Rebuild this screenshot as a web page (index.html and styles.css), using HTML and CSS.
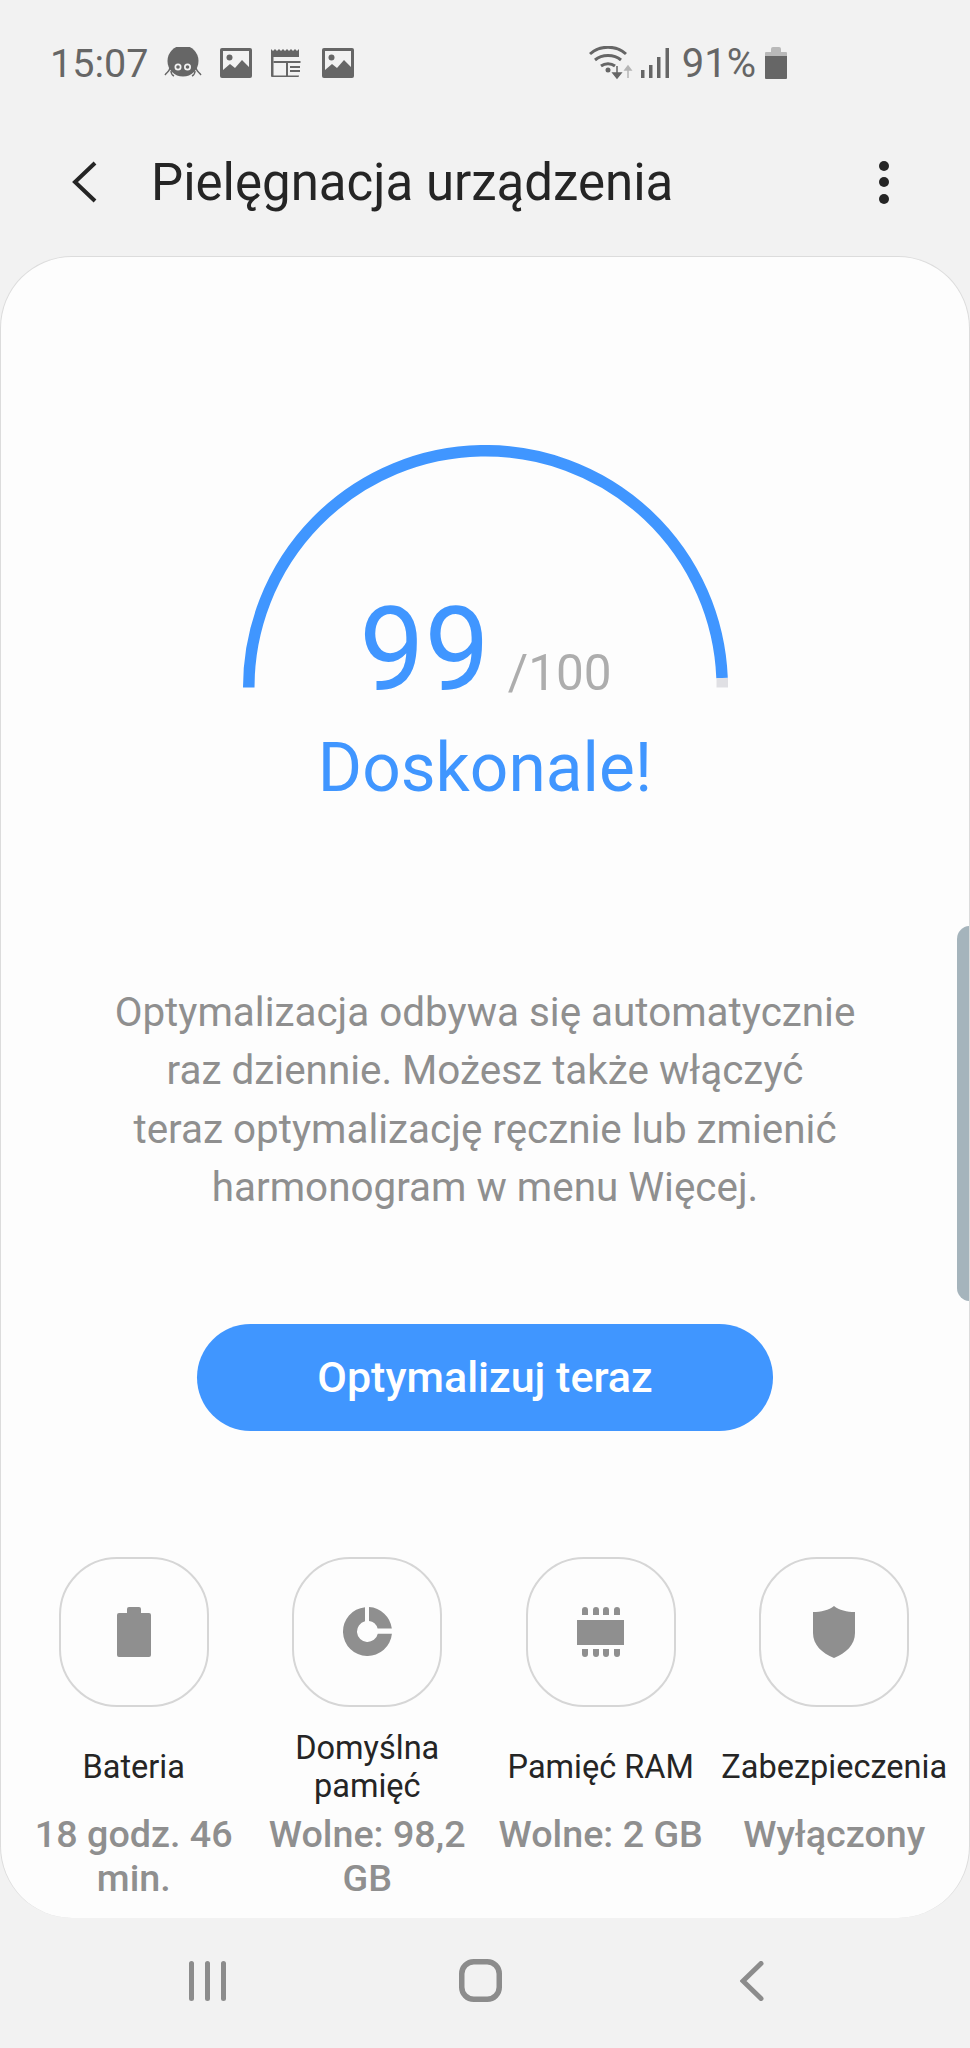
FILE: index.html
```html
<!DOCTYPE html>
<html lang="pl">
<head>
  <meta charset="UTF-8" />
  <meta name="viewport" content="width=device-width, initial-scale=1.0"/>
  <title>Pielęgnacja urządzenia</title>
  <link rel="stylesheet" href="styles.css">
</head>
<body>
  <div class="screen">
    <div class="status-bar">
      <div class="status-left">
        <span class="clock">15:07</span>
        <svg class="icon-spider" viewBox="0 0 38 32">
          <circle cx="19" cy="14" r="15.5" fill="#666"/>
          <path d="M6 21c-1 4-3 4-5 7M32 21c1 4 3 4 5 7M7 24c0 3 1 4 3 5M31 24c0 3-1 4-3 5" fill="none" stroke="#666" stroke-width="1.4"/>
          <circle cx="14" cy="20" r="3.5" fill="#f2f2f2"/>
          <circle cx="23.500" cy="20" r="3.500" fill="#f2f2f2"/>
          <circle cx="14" cy="20" r="1.800" fill="#666"/>
          <circle cx="23.500" cy="20" r="1.800" fill="#666"/>
        </svg>
        <svg class="icon-pic" viewBox="0 0 32 30">
          <rect width="32" height="30" rx="2" fill="#666"/>
          <rect x="3" y="3" width="26" height="24" fill="#f2f2f2"/>
          <circle cx="9.500" cy="9.500" r="3" fill="#666"/>
          <path d="M3 22l7-6 5 4 7-8 7 7v11H3z" fill="#666"/>
        </svg>
        <svg class="icon-news" viewBox="0 0 32 30">
          <path d="M0 1l2 2 2-2 2 2 2-2 2 2 2-2 2 2 2-2 2 2 2-2 2 2 2-2 2 2 2-2v27a1 1 0 0 1-1 1H1a1 1 0 0 1-1-1z" fill="#666"/>
          <rect x="2.500" y="9" width="27" height="18.500" fill="#f2f2f2"/>
          <rect x="2.500" y="13" width="27" height="2" fill="#666"/>
          <rect x="15" y="15" width="2" height="13" fill="#666"/>
          <path d="M19 18h10v2H19zM19 22h10v2H19z" fill="#666"/>
        </svg>
        <svg class="icon-pic" viewBox="0 0 32 30">
          <rect width="32" height="30" rx="2" fill="#666"/>
          <rect x="3" y="3" width="26" height="24" fill="#f2f2f2"/>
          <circle cx="9.500" cy="9.500" r="3" fill="#666"/>
          <path d="M3 22l7-6 5 4 7-8 7 7v11H3z" fill="#666"/>
        </svg>
      </div>
      <div class="status-right">
        <svg class="icon-wifi" viewBox="0 0 44 34">
          <path d="M1 8C11-1 27-1 37 8M6 14c7-6 19-6 26 0M12 20c4-3 10-3 14 0" fill="none" stroke="#666" stroke-width="3"/>
          <circle cx="19" cy="24" r="2.500" fill="#666"/>
          <path d="M28 20v9M24 27l4 5 4-5z" fill="#666" stroke="#666" stroke-width="1.500"/>
          <path d="M39 32v-10M36 24l3-4 3 4z" fill="#b5b5b5" stroke="#b5b5b5" stroke-width="1.500"/>
        </svg>
        <svg class="icon-signal" viewBox="0 0 28 30">
          <path d="M0 22h3.500v8H0zM8 17h3.500v13H8zM16 9h3.500v21H16zM24.500 0H28v30h-3.500z" fill="#666"/>
        </svg>
        <span class="battery-text">91%</span>
        <svg class="icon-battery" viewBox="0 0 22 32">
          <path d="M6 2a2 2 0 0 1 2-2h6a2 2 0 0 1 2 2v3h5a1 1 0 0 1 1 1v3H0V6a1 1 0 0 1 1-1h5z" fill="#b9b9b9"/>
          <path d="M0 9h22v22a1 1 0 0 1-1 1H1a1 1 0 0 1-1-1z" fill="#666"/>
        </svg>
      </div>
    </div>

    <div class="app-bar">
      <svg class="icon-back" viewBox="0 0 26 42">
        <path d="M24 2L4 21l20 19" fill="none" stroke="#252525" stroke-width="4"/>
      </svg>
      <h1 class="title">Pielęgnacja urządzenia</h1>
      <div class="more">
        <span class="dot"></span>
        <span class="dot"></span>
        <span class="dot"></span>
      </div>
    </div>

    <div class="card">
      <div class="scroll-handle"></div>

      <div class="gauge">
        <svg class="gauge-arc" viewBox="0 0 485 242.500">
          <path d="M5.750 242.500A236.750 236.750 0 0 1 479.060 233" fill="none" stroke="#4096ff" stroke-width="11.500"/>
          <path d="M479.250 242.500V233" fill="none" stroke="#e0e0e4" stroke-width="11.500"/>
        </svg>
        <div class="score">
          <span class="score-value">99</span>
          <span class="score-max">/100</span>
        </div>
      </div>
      <div class="rating">Doskonale!</div>

      <p class="info">Optymalizacja odbywa się automatycznie<br>raz dziennie. Możesz także włączyć<br>teraz optymalizację ręcznie lub zmienić<br>harmonogram w menu Więcej.</p>

      <button class="optimize">Optymalizuj teraz</button>

      <div class="tiles">
        <div class="tile">
          <div class="tile-icon">
            <svg viewBox="0 0 34 50" class="svg-battery">
              <path d="M10 2a2 2 0 0 1 2-2h10a2 2 0 0 1 2 2v4h8a2 2 0 0 1 2 2v40a2 2 0 0 1-2 2H2a2 2 0 0 1-2-2V8a2 2 0 0 1 2-2h8z" fill="#8f8f8f"/>
            </svg>
          </div>
          <div class="tile-label">Bateria</div>
          <div class="tile-value">18 godz. 46 min.</div>
        </div>
        <div class="tile">
          <div class="tile-icon">
            <svg viewBox="0 0 49 49" class="svg-storage">
              <path d="M22 .13A24.500 24.500 0 1 0 48.900 26.700H34.770A10.500 10.500 0 1 1 22 14.300Z" fill="#8f8f8f"/>
              <path d="M26 .05A24.500 24.500 0 0 1 48.830 21.500H34.600A10.500 10.500 0 0 0 26 14.100Z" fill="#8f8f8f"/>
            </svg>
          </div>
          <div class="tile-label">Domyślna pamięć</div>
          <div class="tile-value">Wolne: 98,2 GB</div>
        </div>
        <div class="tile">
          <div class="tile-icon">
            <svg viewBox="0 0 47 50" class="svg-ram">
              <rect x="0" y="13" width="47" height="25" fill="#8f8f8f"/>
              <path d="M5 8V3a3 3 0 0 1 6 0v5zM16 8V3a3 3 0 0 1 6 0v5zM26 8V3a3 3 0 0 1 6 0v5zM37 8V3a3 3 0 0 1 6 0v5zM5 42v5a3 3 0 0 0 6 0v-5zM16 42v5a3 3 0 0 0 6 0v-5zM26 42v5a3 3 0 0 0 6 0v-5zM37 42v5a3 3 0 0 0 6 0v-5z" fill="#8f8f8f"/>
            </svg>
          </div>
          <div class="tile-label">Pamięć RAM</div>
          <div class="tile-value">Wolne: 2 GB</div>
        </div>
        <div class="tile">
          <div class="tile-icon">
            <svg viewBox="0 0 42 52" class="svg-shield">
              <path d="M21 0c5 4 13 6 21 6v21c0 12-9 20-21 25C9 47 0 39 0 27V6c8 0 16-2 21-6z" fill="#8f8f8f"/>
            </svg>
          </div>
          <div class="tile-label">Zabezpieczenia</div>
          <div class="tile-value">Wyłączony</div>
        </div>
      </div>
    </div>

    <div class="nav-bar">
      <svg class="nav-recent" viewBox="0 0 38 40">
        <path d="M2.500 2.500v35M18.500 2.500v35M34.500 2.500v35" fill="none" stroke="#8c8c8c" stroke-width="5" stroke-linecap="round"/>
      </svg>
      <svg class="nav-home" viewBox="0 0 43 43">
        <rect x="2.750" y="2.750" width="37.500" height="37.500" rx="12" fill="none" stroke="#8c8c8c" stroke-width="5.500"/>
      </svg>
      <svg class="nav-back" viewBox="0 0 24 40">
        <path d="M21 2.500L3 20l18 17.500" fill="none" stroke="#8c8c8c" stroke-width="5" stroke-linecap="round"/>
      </svg>
    </div>
  </div>
</body>
</html>
```
FILE: styles.css
```css
* {
  box-sizing: border-box;
}

body {
  margin: 0;
  padding: 0;
  background-color: #f2f2f2;
  font-family: Roboto, "Liberation Sans", sans-serif;
}

svg {
  display: block;
}

.screen {
  width: 970px;
  height: 2048px;
  display: flex;
  flex-direction: column;
  overflow: hidden;
}

/* status bar */
.status-bar {
  height: 124px;
  padding: 2px 183px 0 50px;
  display: flex;
  align-items: center;
  justify-content: space-between;
  color: #666;
}

.status-left,
.status-right {
  display: flex;
  align-items: center;
}

.clock {
  font-size: 39.500px;
}

.battery-text {
  font-size: 40px;
}

.icon-spider {
  width: 38px;
  height: 32px;
  margin-left: 16px;
}

.icon-pic,
.icon-news {
  width: 32px;
  height: 30px;
}

.icon-spider + .icon-pic {
  margin-left: 17.500px;
}

.icon-news {
  margin-left: 19px;
}

.icon-news + .icon-pic {
  margin-left: 19px;
}

.icon-wifi {
  width: 44px;
  height: 34px;
}

.icon-signal {
  width: 28px;
  height: 30px;
  margin-left: 8px;
}

.battery-text {
  margin-left: 13px;
}

.icon-battery {
  width: 22px;
  height: 32px;
  margin-left: 9px;
}

/* app bar */
.app-bar {
  height: 132px;
  padding: 0 81px 16px 71px;
  display: flex;
  align-items: center;
}

.icon-back {
  width: 26px;
  height: 42px;
}

.title {
  flex: 1;
  margin: 0 0 0 54px;
  font-size: 51px;
  font-weight: 400;
  color: #252525;
}

.more {
  display: flex;
  flex-direction: column;
  gap: 6.500px;
}

.dot {
  width: 10px;
  height: 10px;
  border-radius: 50%;
  background-color: #252525;
}

/* main card */
.card {
  position: relative;
  height: 1662px;
  padding-top: 188px;
  background-color: #fdfdfd;
  border: 1px solid #dcdcdc;
  border-bottom: none;
  border-radius: 72px;
  overflow: hidden;
}

.scroll-handle {
  position: absolute;
  top: 669px;
  right: -1px;
  width: 13px;
  height: 375px;
  background-color: #a5b4bc;
  border-radius: 14px 0 0 14px;
}

.gauge {
  display: grid;
  width: 485px;
  margin: 0 auto;
}

.gauge-arc,
.score {
  grid-area: 1 / 1;
}

.gauge-arc {
  width: 485px;
  height: 242.500px;
}

.score {
  align-self: end;
  margin-bottom: -20.500px;
  display: flex;
  align-items: baseline;
  justify-content: center;
  line-height: 1;
}

.score-value {
  margin-left: 1px;
  font-size: 116px;
  color: #4096ff;
}

.score-max {
  margin-left: 18px;
  font-size: 49.500px;
  color: #adadad;
}

.rating {
  margin-top: 41.500px;
  text-align: center;
  font-size: 67.600px;
  line-height: 78px;
  color: #4096ff;
}

.info {
  margin: 177px 0 0;
  text-align: center;
  font-size: 40.400px;
  line-height: 58.400px;
  color: #8f8f8f;
}

.optimize {
  display: block;
  width: 576px;
  height: 107px;
  margin: 106px auto 0;
  border: none;
  border-radius: 54px;
  background-color: #4096ff;
  color: #fff;
  font-family: inherit;
  font-size: 43px;
  font-weight: 500;
}

/* bottom tiles */
.tiles {
  margin-top: 126px;
  padding: 0 18px 0 16px;
  display: grid;
  grid-template-columns: repeat(4, 1fr);
}

.tile {
  display: flex;
  flex-direction: column;
  align-items: center;
  text-align: center;
}

.tile-icon {
  width: 150px;
  height: 150px;
  display: flex;
  align-items: center;
  justify-content: center;
  border: 2px solid #d6d6d6;
  border-radius: 58px;
}

.svg-battery {
  width: 34px;
  height: 50px;
}

.svg-storage {
  width: 49px;
  height: 49px;
}

.svg-ram {
  width: 47px;
  height: 50px;
}

.svg-shield {
  width: 42px;
  height: 52px;
}

.tile-label {
  height: 76px;
  margin-top: 22px;
  display: flex;
  align-items: center;
  font-size: 32.500px;
  line-height: 38px;
  color: #252525;
}

.tile-value {
  margin-top: 7px;
  font-size: 37.700px;
  font-weight: 500;
  line-height: 44px;
  color: #8f8f8f;
}

/* nav bar */
.nav-bar {
  flex: 1;
  padding: 0 0 5px 189px;
  display: flex;
  align-items: center;
}

.nav-recent {
  width: 38px;
  height: 40px;
}

.nav-home {
  width: 43px;
  height: 43px;
  margin-left: 232px;
}

.nav-back {
  width: 24px;
  height: 40px;
  margin-left: 238px;
}
```
